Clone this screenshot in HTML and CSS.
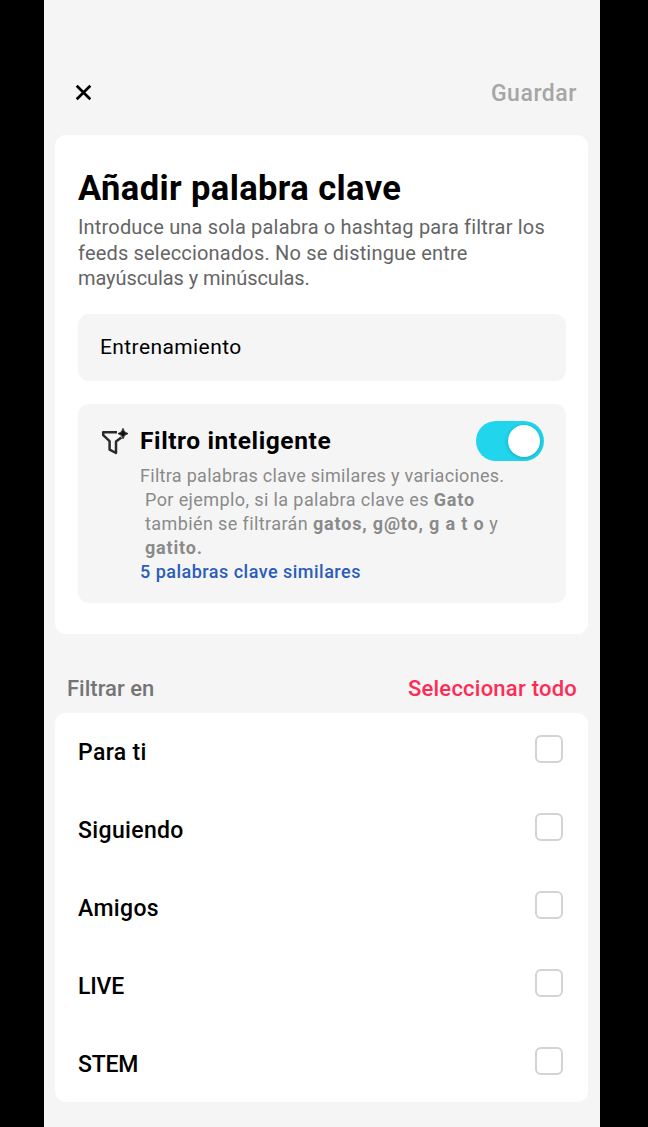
FILE: index.html
```html
<!DOCTYPE html>
<html lang="es">
<head>
    <meta charset="UTF-8">
    <meta name="viewport" content="width=device-width, initial-scale=1.0">
    <title>Añadir palabra clave</title>
    <link rel="stylesheet" href="styles.css">
</head>
<body>
    <div class="screen">
        <header class="top-bar">
            <button class="close-btn" aria-label="Cerrar">
                <svg width="17" height="17" viewBox="0 0 17 17">
                    <path d="M1.7 1.7 L15.3 15.3 M15.3 1.7 L1.7 15.3" stroke="#000" stroke-width="2.7" fill="none"/>
                </svg>
            </button>
            <button class="save-btn">Guardar</button>
        </header>

        <main>
            <section class="card keyword-card">
                <h1>Añadir palabra clave</h1>
                <p class="intro">Introduce una sola palabra o hashtag para filtrar los<br>feeds seleccionados. No se distingue entre<br><span class="tight">mayúsculas y minúsculas.</span></p>
                <div class="keyword-field">Entrenamiento</div>

                <div class="smart-filter">
                    <svg class="filter-icon" width="28" height="28" viewBox="0 0 28 28">
                        <path d="M16 4.2 H2.2 V7.2 L8.6 13.2 V21.6 L15 25 V13.6 L20.4 9.6" stroke="#2a2a2a" stroke-width="2.5" stroke-linejoin="round" fill="none"/>
                        <path d="M22 0.4 Q22.8 4.6 27 5.6 Q22.8 6.6 22 10.8 Q21.2 6.6 17 5.6 Q21.2 4.6 22 0.4 Z" fill="#111" stroke="#111" stroke-width="0.8"/>
                    </svg>
                    <div class="smart-body">
                        <div class="smart-head">
                            <h2>Filtro inteligente</h2>
                            <span class="toggle"><span class="knob"></span></span>
                        </div>
                        <p class="smart-text">Filtra palabras clave similares y variaciones.</p>
                        <p class="smart-text example">Por ejemplo, si la palabra clave es <b>Gato</b><br>también se filtrarán <b>gatos, g@to, g a t o</b> y<br><b>gatito.</b></p>
                        <a class="similar-link">5 palabras clave similares</a>
                    </div>
                </div>
            </section>

            <div class="list-head">
                <span class="list-title">Filtrar en</span>
                <span class="select-all">Seleccionar todo</span>
            </div>

            <ul class="card feed-list">
                <li><span class="feed-name">Para ti</span><span class="checkbox"></span></li>
                <li><span class="feed-name">Siguiendo</span><span class="checkbox"></span></li>
                <li><span class="feed-name">Amigos</span><span class="checkbox"></span></li>
                <li><span class="feed-name caps">LIVE</span><span class="checkbox"></span></li>
                <li><span class="feed-name caps">STEM</span><span class="checkbox"></span></li>
            </ul>
        </main>
    </div>
</body>
</html>
```

FILE: styles.css
```css
* {
    box-sizing: border-box;
}
body {
    margin: 0;
    background-color: #000;
    font-family: Roboto, "Liberation Sans", sans-serif;
    color: #000;
}
h1, h2, p, ul {
    margin: 0;
    padding: 0;
}
button {
    padding: 0;
    border: none;
    background: none;
    font-family: inherit;
}
.screen {
    width: 556px;
    height: 1127px;
    margin-left: 44px;
    padding: 0 12px 0 11px;
    background-color: #f5f5f5;
    overflow: hidden;
    white-space: nowrap;
}
.top-bar {
    display: flex;
    justify-content: space-between;
    align-items: center;
    height: 135px;
    padding: 50px 11px 0 20px;
}
.close-btn {
    display: flex;
}
.save-btn {
    padding-top: 1px;
    font-size: 23px;
    font-weight: 500;
    letter-spacing: 0.55px;
    color: #a6a6a6;
}
.card {
    background-color: #fff;
    border-radius: 11px;
}
.keyword-card {
    height: 499px;
    padding: 33px 22px 0 23px;
}
h1 {
    font-size: 34.5px;
    line-height: 40px;
    font-weight: 700;
    letter-spacing: 0.4px;
}
.intro {
    margin-top: 7px;
    font-size: 20px;
    line-height: 25.5px;
    letter-spacing: 0.18px;
    color: #656565;
}
.tight {
    letter-spacing: -0.08px;
}
.keyword-field {
    height: 67px;
    margin-top: 22px;
    padding-left: 22px;
    border-radius: 11px;
    background-color: #f5f5f5;
    font-size: 21px;
    line-height: 66px;
    letter-spacing: 0.4px;
}
.smart-filter {
    display: flex;
    height: 199px;
    margin-top: 23px;
    padding: 17px 22.5px 0 23px;
    border-radius: 11px;
    background-color: #f5f5f5;
}
.filter-icon {
    flex: none;
    margin: 7px 11px 0 0;
}
.smart-body {
    flex: 1;
}
.smart-head {
    display: flex;
    justify-content: space-between;
    align-items: center;
    height: 40px;
    margin-bottom: 3px;
}
h2 {
    font-size: 24.5px;
    font-weight: 700;
    letter-spacing: 0.6px;
}
.toggle {
    display: flex;
    justify-content: flex-end;
    align-items: center;
    width: 68px;
    height: 40px;
    padding-right: 4px;
    border-radius: 20px;
    background-color: #20d5ec;
}
.knob {
    width: 32px;
    height: 32px;
    border-radius: 50%;
    background-color: #fff;
    box-shadow: 0 1px 4px rgba(0, 0, 0, 0.2);
}
.smart-text {
    font-size: 18px;
    line-height: 24px;
    letter-spacing: 0.3px;
    color: #8a8a8a;
}
.example {
    padding-left: 5px;
    letter-spacing: 0.4px;
}
.smart-text b {
    font-weight: 700;
    letter-spacing: 0.82px;
}
.similar-link {
    display: block;
    font-size: 18px;
    line-height: 24px;
    font-weight: 500;
    letter-spacing: 0.48px;
    color: #2b5db9;
}
.list-head {
    display: flex;
    justify-content: space-between;
    align-items: flex-end;
    height: 79px;
    padding: 0 11px 10px 12px;
    font-size: 22px;
    line-height: 28px;
    font-weight: 500;
}
.list-title {
    color: #757575;
}
.select-all {
    letter-spacing: 0.23px;
    color: #fe2c55;
}
.feed-list {
    height: 389px;
    list-style: none;
}
.feed-list li {
    display: flex;
    justify-content: space-between;
    align-items: center;
    height: 77.8px;
    padding: 0 25px 0 23px;
    font-size: 23px;
    font-weight: 500;
}
.feed-name {
    padding-top: 2px;
    letter-spacing: 0.35px;
}
.caps {
    letter-spacing: -0.2px;
}
.checkbox {
    width: 28px;
    height: 28px;
    margin-bottom: 5px;
    border: 2px solid #d3d3d3;
    border-radius: 6px;
}
```
